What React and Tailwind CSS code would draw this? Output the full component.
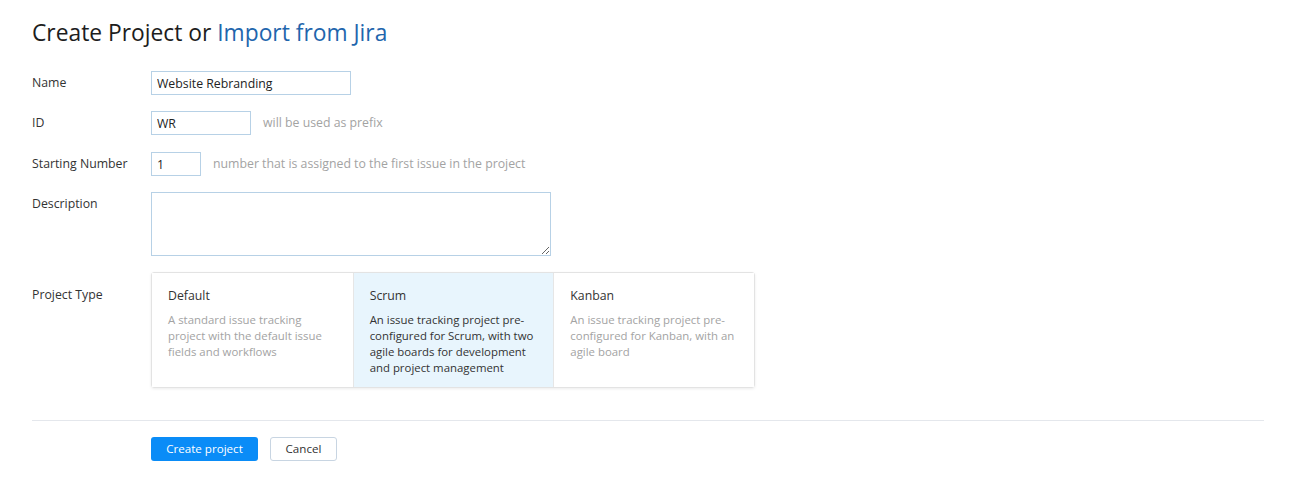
import { useState } from "react";

const types = [
  {
    id: "default",
    title: "Default",
    text: "A standard issue tracking project with the default issue fields and workflows",
  },
  {
    id: "scrum",
    title: "Scrum",
    text: "An issue tracking project pre-configured for Scrum, with two agile boards for development and project management",
  },
  {
    id: "kanban",
    title: "Kanban",
    text: "An issue tracking project pre-configured for Kanban, with an agile board",
  },
];

function Row({ label, children, top = false, className = "" }) {
  return (
    <div className={`flex ${top ? "items-start" : "items-center"} ${className}`}>
      <div className="w-[119px] shrink-0 text-[12.3px] leading-6 text-[#333]">{label}</div>
      {children}
    </div>
  );
}

export default function App() {
  const [name, setName] = useState("Website Rebranding");
  const [prefix, setPrefix] = useState("WR");
  const [start, setStart] = useState("1");
  const [kind, setKind] = useState("scrum");

  const inputCls =
    "h-6 border border-[#b7d1e6] bg-white px-[5px] text-[12.3px] text-[#222] outline-none focus:border-[#5aa4e0]";

  return (
    <div className="min-h-screen bg-white px-8 pt-[17px] font-['Open_Sans','Noto_Sans',sans-serif]">
      <h1 className="text-[22.8px] leading-8 font-normal text-[#1d1d1d]">
        Create Project or <span className="text-[#1f66ad]">Import from Jira</span>
      </h1>

      <div className="mt-[22px] flex flex-col gap-4">
        <Row label="Name">
          <input className={`${inputCls} w-[200px]`} value={name} onChange={(e) => setName(e.target.value)} />
        </Row>
        <Row label="ID">
          <input className={`${inputCls} w-[100px]`} value={prefix} onChange={(e) => setPrefix(e.target.value)} />
          <span className="ml-3 text-[12.3px] text-[#a3a3a3]">will be used as prefix</span>
        </Row>
        <Row label="Starting Number" className="mt-px">
          <input className={`${inputCls} w-[50px]`} value={start} onChange={(e) => setStart(e.target.value)} />
          <span className="ml-3 text-[12.3px] text-[#a3a3a3]">number that is assigned to the first issue in the project</span>
        </Row>
        <Row label="Description" top>
          <textarea className="block h-16 w-[400px] resize border border-[#b7d1e6] px-[5px] text-[12.3px] outline-none" />
        </Row>
        <Row label={<span className="block pt-[11px]">Project Type</span>} top>
          <div className="grid w-[604px] grid-cols-3 rounded-[3px] border border-[#e3e3e3] shadow-[0_1px_3px_rgba(0,0,0,0.08)]">
            {types.map((t, i) => {
              const active = kind === t.id;
              return (
                <button
                  key={t.id}
                  type="button"
                  onClick={() => setKind(t.id)}
                  className={`flex h-[114px] flex-col justify-start px-4 pt-[15px] text-left ${
                    i > 0 ? "border-l border-[#e6e6e6]" : ""
                  } ${active ? "bg-[#e8f5fd]" : "bg-white"}`}
                >
                  <div className="text-[12.3px] leading-4 text-[#333]">{t.title}</div>
                  <div
                    className={`mt-2 text-[11.4px] leading-4 ${active ? "text-[#333]" : "text-[#a3a3a3]"}`}
                  >
                    {t.text}
                  </div>
                </button>
              );
            })}
          </div>
        </Row>
      </div>

      <div className="mt-8 border-t border-[#e4e7ec]" />

      <div className="ml-[119px] mt-4 flex gap-3">
        <button
          type="button"
          className="h-6 w-[107px] rounded-[3px] bg-[#0a8cf7] text-[11.6px] text-white"
        >
          Create project
        </button>
        <button
          type="button"
          className="h-6 w-[67px] rounded-[3px] border border-[#c8d5e2] bg-white text-[11.6px] text-[#333]"
        >
          Cancel
        </button>
      </div>
    </div>
  );
}
